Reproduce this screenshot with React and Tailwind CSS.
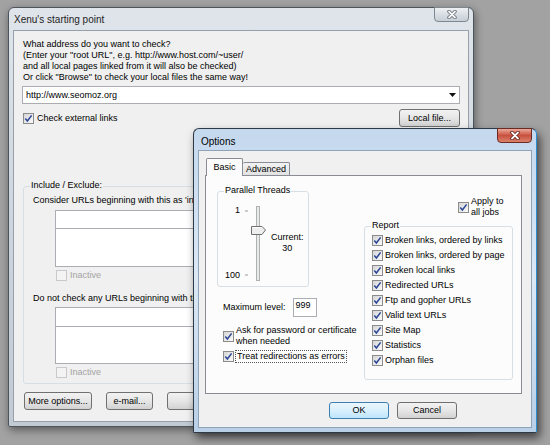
import React from 'react'

const font = "font-['Liberation_Sans',Arial,sans-serif]"

function Check({ checked = true, disabled = false }) {
  return (
    <span
      className={`inline-flex h-[11px] w-[11px] shrink-0 items-center justify-center border ${
        disabled ? 'border-[#c9c9c9] bg-[#f3f3f3]' : 'border-[#8b8b8b] bg-linear-to-br from-[#d6d6d6] to-[#fafafa]'
      }`}
    >
      {checked && (
        <svg width="9" height="9" viewBox="0 0 9 9">
          <path d="M1.3 4.6 L3.4 7 L7.6 1.4" fill="none" stroke="#2a4596" strokeWidth="1.5" />
        </svg>
      )}
    </span>
  )
}

function Btn({ children, className = '', def = false }) {
  return (
    <div
      className={`flex items-center justify-center rounded-[3px] border text-[9px] text-black ${
        def
          ? 'border-[#3c7fb1] bg-linear-to-b from-[#eaf6fd] via-[#d9f0fc] to-[#bee6fd]'
          : 'border-[#707070] bg-linear-to-b from-[#f2f2f2] via-[#e6e6e6] to-[#d2d2d2]'
      } ${className}`}
    >
      {children}
    </div>
  )
}

function CloseX({ red = false }) {
  return (
    <div
      className={`flex h-[15px] w-[35px] items-center justify-center rounded-b-[4px] border ${
        red
          ? 'border-[#6b2a22] bg-linear-to-b from-[#e9a99b] via-[#c9503f] to-[#d9826b]'
          : 'border-[#7f8891] bg-linear-to-b from-[#eef1f4] via-[#d9dee4] to-[#c7ced6]'
      }`}
    >
      <svg width="12" height="9" viewBox="0 0 12 9">
        <path d="M3 1.5 L9 7.5 M9 1.5 L3 7.5" stroke={red ? '#5a1a12' : '#5f6870'} strokeWidth="3.4" strokeLinecap="round" />
        <path d="M3 1.5 L9 7.5 M9 1.5 L3 7.5" stroke={red ? '#ffffff' : '#f4f6f8'} strokeWidth="1.8" strokeLinecap="round" />
      </svg>
    </div>
  )
}

function Group({ label, className = '', children }) {
  return (
    <div className={`relative rounded-[3px] border border-[#d5dfe5] ${className}`}>
      <span className="absolute -top-[7px] left-[6px] px-[1px] leading-[11px] bg-inherit">{label}</span>
      {children}
    </div>
  )
}

const reports = [
  'Broken links, ordered by links',
  'Broken links, ordered by page',
  'Broken local links',
  'Redirected URLs',
  'Ftp and gopher URLs',
  'Valid text URLs',
  'Site Map',
  'Statistics',
  'Orphan files',
]

function BackWindow() {
  return (
    <div className="absolute left-[8px] top-[7px] flex h-[420px] w-[466px] flex-col rounded-t-[6px] rounded-b-[2px] border border-[#4d545c] bg-linear-to-b from-[#dfe5eb] via-[#cdd5de] to-[#c2cbd4] px-[4px] shadow-[1px_3px_8px_rgba(0,0,0,0.45)]">
      <div className="flex h-[22px] items-start justify-between pl-[1px]">
        <span className="mt-[4px] text-[10px] text-[#1e1e1e]">Xenu's starting point</span>
        <div className="-mt-[1px]">
          <CloseX />
        </div>
      </div>
      <div className="flex h-[392px] flex-col border border-[#97a0aa] bg-[#f0f0f0] pl-[9px] pt-[8px] text-[9px] leading-[11px] text-black">
        <div>
          <div>What address do you want to check?</div>
          <div>(Enter your "root URL", e.g. http://www.host.com/~user/</div>
          <div>and all local pages linked from it will also be checked)</div>
          <div>Or click "Browse" to check your local files the same way!</div>
        </div>
        <div className="-ml-[1px] mt-[3px] flex h-[18px] w-[438px] items-center justify-between border border-[#abadb3] bg-white pl-[3px] pr-[3px]">
          <span>http://www.seomoz.org</span>
          <svg width="7" height="4" viewBox="0 0 7 4">
            <path d="M0 0 H7 L3.5 4 Z" fill="#111" />
          </svg>
        </div>
        <div className="mt-[5px] flex h-[18px] w-[437px] items-center justify-between">
          <div className="flex items-center gap-[3px]">
            <Check />
            <span>Check external links</span>
          </div>
          <Btn className="h-[18px] w-[61px]">Local file...</Btn>
        </div>
        <Group label="Include / Exclude:" className="mt-[59px] h-[198px] w-[436px] bg-[#f0f0f0]">
          <div className="flex flex-col pl-[9px] pt-[8px]">
            <span>Consider URLs beginning with this as 'internal':</span>
            <div className="ml-[22px] mt-[4px] flex w-[380px] flex-col border border-[#abadb3] bg-white">
              <div className="h-[18px] border-b border-[#abadb3]" />
              <div className="h-[37px]" />
            </div>
            <div className="ml-[23px] mt-[3px] flex items-center gap-[3px] text-[#a3a3a3]">
              <Check checked={false} disabled />
              <span>Inactive</span>
            </div>
            <span className="mt-[12px]">Do not check any URLs beginning with this:</span>
            <div className="ml-[22px] mt-[3px] flex w-[380px] flex-col border border-[#abadb3] bg-white">
              <div className="h-[19px] border-b border-[#abadb3]" />
              <div className="h-[36px]" />
            </div>
            <div className="ml-[23px] mt-[3px] flex items-center gap-[3px] text-[#a3a3a3]">
              <Check checked={false} disabled />
              <span>Inactive</span>
            </div>
          </div>
        </Group>
        <div className="mt-[8px] flex gap-[14px] pl-[1px]">
          <Btn className="h-[18px] w-[68px]">More options...</Btn>
          <Btn className="h-[18px] w-[47px]">e-mail...</Btn>
          <Btn className="h-[18px] w-[80px]">Cancel</Btn>
        </div>
      </div>
    </div>
  )
}

function OptionsWindow() {
  return (
    <div className="absolute left-[193px] top-[128px] flex h-[305px] w-[344px] flex-col rounded-t-[6px] rounded-b-[2px] border border-[#2e3946] border-r-[#2a8fd0] bg-linear-to-b from-[#c4d8ee] via-[#dce8f4] to-[#b9cfe6] px-[4px] shadow-[3px_5px_10px_rgba(0,0,0,0.6)]">
      <div className="flex h-[21px] items-start justify-between pl-[3px]">
        <span className="mt-[5px] text-[10px] text-black">Options</span>
        <div className="-mt-[1px]">
          <CloseX red />
        </div>
      </div>
      <div className="flex h-[278px] flex-col border border-[#8ea2b8] bg-[#f0f0f0] pl-[6px] pt-[7px] text-[9px] leading-[11px] text-black">
        <div className="relative z-10 flex items-end pl-[1px]">
          <div className="flex h-[18px] w-[37px] justify-center rounded-t-[2px] border border-b-0 border-[#898c95] bg-[#fcfcfc] pt-[3px]">
            Basic
          </div>
          <div className="mb-[1px] flex h-[13px] w-[47px] justify-center rounded-t-[2px] border border-l-0 border-b-0 border-[#898c95] bg-linear-to-b from-[#f2f2f2] to-[#e2e2e2] pt-[1px]">
            Advanced
          </div>
        </div>
        <div className="-mt-[1px] flex h-[219px] w-[317px] border border-[#898c95] bg-[#fcfcfc] pl-[11px] pt-[15px]">
          <div className="flex w-[147px] flex-col">
            <Group label="Parallel Threads" className="h-[96px] w-[92px] bg-[#fcfcfc]">
              <div className="flex pt-[13px]">
                <div className="flex h-[76px] w-[22px] flex-col items-end justify-between">
                  <span>1</span>
                  <span>100</span>
                </div>
                <svg width="26" height="76" viewBox="0 0 26 76" className="ml-[2px]">
                  <path d="M3 6 H6 M3 70 H6" stroke="#9a9a9a" strokeWidth="1" />
                  <rect x="14.5" y="1.5" width="3" height="74" fill="#e7eaea" stroke="#b0b0b0" strokeWidth="1" />
                  <path d="M9.5 21.5 H20 L23.5 25 L20 29.5 H9.5 Z" fill="#eeeeee" stroke="#707070" strokeWidth="1" />
                  <path d="M10.5 22.5 H19.5" stroke="#ffffff" strokeWidth="1" />
                </svg>
                <div className="ml-[3px] flex flex-col items-center pt-[27px]">
                  <span>Current:</span>
                  <span>30</span>
                </div>
              </div>
            </Group>
            <div className="ml-[6px] mt-[11px] flex items-center">
              <span>Maximum level:</span>
              <div className="ml-[7px] flex h-[19px] w-[24px] items-start border border-[#abadb3] bg-white pl-[2px] pt-[1px]">
                999
              </div>
            </div>
            <div className="ml-[6px] mt-[8px] flex items-center gap-[2px]">
              <Check />
              <span>
                Ask for password or certificate
                <br />
                when needed
              </span>
            </div>
            <div className="ml-[6px] mt-[3px] flex items-center gap-[1px]">
              <Check />
              <span className="border border-dotted border-[#555] px-[1px]">Treat redirections as errors</span>
            </div>
          </div>
          <div className="flex w-[149px] flex-col">
            <div className="ml-[94px] mt-[5px] flex items-center gap-[2px]">
              <Check />
              <span>
                Apply to
                <br />
                all jobs
              </span>
            </div>
            <Group label="Report" className="mt-[8px] h-[154px] w-[149px] bg-[#fcfcfc]">
              <div className="flex flex-col pl-[7px] pt-[6px]">
                {reports.map((r) => (
                  <div key={r} className="flex h-[15px] items-center gap-[2px]">
                    <Check />
                    <span>{r}</span>
                  </div>
                ))}
              </div>
            </Group>
          </div>
        </div>
        <div className="mt-[8px] flex gap-[8px] pl-[124px]">
          <Btn def className="h-[17px] w-[60px]">OK</Btn>
          <Btn className="h-[17px] w-[60px]">Cancel</Btn>
        </div>
      </div>
    </div>
  )
}

export default function App() {
  return (
    <div className={`relative h-[445px] w-[550px] overflow-hidden bg-[#a2a2a2] ${font}`}>
      <BackWindow />
      <OptionsWindow />
    </div>
  )
}
